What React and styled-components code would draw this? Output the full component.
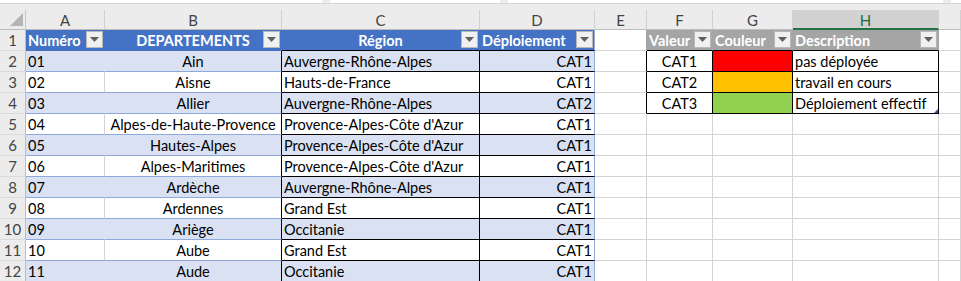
import * as React from 'react';
import styled, { createGlobalStyle } from 'styled-components';

const GlobalStyle = createGlobalStyle`
  html, body {
    margin: 0;
    padding: 0;
    background: #ffffff;
    overflow: hidden;
  }
  body {
    font-family: Lato, "Liberation Sans", sans-serif;
  }
`;

const GRID = '#d4d4d4';
const BLACK = '#000000';
const BAND = '#d9e1f2';
const BAND_LINE = '#8ea9db';
const BLUE = '#4472c4';
const GREY_HEAD = '#a5a5a5';
const HEAD_BG = '#ececec';

const Page = styled.div`
  width: 961px;
  height: 281px;
  overflow: hidden;
  background: ${HEAD_BG};
`;

const TopStrip = styled.div`
  display: flex;
  height: 3px;
  border-bottom: 1px solid #d6d6d6;
  gap: 8px;
`;

const StripPart = styled.div`
  background: #ffffff;
  width: ${props => props.w};
  flex: ${props => (props.w ? 'none' : '1')};
`;

const Spacer = styled.div`
  height: 6px;
`;

const Sheet = styled.div`
  display: grid;
  grid-template-columns: 26px 79px 177px 198px 115px 52px 66px 80px 146px 1fr;
  grid-auto-rows: 21px;
  grid-template-rows: 20px;
`;

const Corner = styled.div`
  background: ${HEAD_BG};
  border-right: 1px solid #c8c8c8;
  border-bottom: 1px solid #bdbdbd;
  box-sizing: border-box;
  display: flex;
  align-items: flex-end;
  justify-content: flex-end;
  padding: 0 2px 3px 0;
`;

const ColHead = styled.div`
  box-sizing: border-box;
  height: 20px;
  background: ${props => (props.$active ? '#d2d2d2' : HEAD_BG)};
  border-right: 1px solid #d0d0d0;
  border-bottom: ${props => (props.$active ? '2px solid #217346' : '1px solid #bdbdbd')};
  color: ${props => (props.$active ? '#1d6b3d' : '#444444')};
  font-size: 15px;
  display: flex;
  align-items: center;
  justify-content: center;
  padding-top: ${props => (props.$active ? '1px' : '0')};
`;

const RowHead = styled.div`
  box-sizing: border-box;
  background: ${HEAD_BG};
  border-right: 1px solid #bdbdbd;
  border-bottom: 1px solid #dadada;
  color: #444444;
  font-size: 15px;
  display: flex;
  align-items: center;
  justify-content: center;
`;

const Cell = styled.div`
  position: relative;
  box-sizing: border-box;
  height: 21px;
  background: ${props => props.$bg || '#ffffff'};
  border-right: 1px solid ${props => props.$r || GRID};
  border-bottom: 1px solid ${props => props.$b || GRID};
  color: ${props => props.$color || '#000000'};
  font-weight: ${props => (props.$bold ? 700 : 400)};
  font-size: 14.5px;
  display: flex;
  align-items: center;
  justify-content: ${props => props.$align || 'flex-start'};
  padding: 0 ${props => (props.$pr || '2px')} 0 2px;
  white-space: nowrap;
  overflow: hidden;
`;

const FilterBtn = styled.span`
  position: absolute;
  right: 1px;
  top: 1px;
  width: 17px;
  height: 17px;
  box-sizing: border-box;
  background: #f0f0f0;
  border: 1px solid #b8b8b8;
  display: flex;
  align-items: center;
  justify-content: center;
`;

const Handle = styled.span`
  position: absolute;
  right: 0;
  bottom: 0;
  width: 0;
  height: 0;
  border-left: 4px solid transparent;
  border-bottom: 4px solid #2f5597;
`;

function Filter() {
  return (
    <FilterBtn>
      <svg width="9" height="5" viewBox="0 0 9 5">
        <path d="M0 0 L9 0 L4.5 5 Z" fill="#5f5f5f" />
      </svg>
    </FilterBtn>
  );
}

const rows = [
  ['01', 'Ain', 'Auvergne-Rhône-Alpes', 'CAT1'],
  ['02', 'Aisne', 'Hauts-de-France', 'CAT1'],
  ['03', 'Allier', 'Auvergne-Rhône-Alpes', 'CAT2'],
  ['04', 'Alpes-de-Haute-Provence', "Provence-Alpes-Côte d'Azur", 'CAT1'],
  ['05', 'Hautes-Alpes', "Provence-Alpes-Côte d'Azur", 'CAT1'],
  ['06', 'Alpes-Maritimes', "Provence-Alpes-Côte d'Azur", 'CAT1'],
  ['07', 'Ardèche', 'Auvergne-Rhône-Alpes', 'CAT1'],
  ['08', 'Ardennes', 'Grand Est', 'CAT1'],
  ['09', 'Ariège', 'Occitanie', 'CAT1'],
  ['10', 'Aube', 'Grand Est', 'CAT1'],
  ['11', 'Aude', 'Occitanie', 'CAT1'],
];

const legend = [
  ['CAT1', '#ff0000', 'pas déployée'],
  ['CAT2', '#ffc000', 'travail en cours'],
  ['CAT3', '#92d050', 'Déploiement effectif'],
];

const letters = ['A', 'B', 'C', 'D', 'E', 'F', 'G', 'H', ''];

export default function App() {
  return (
    <>
      <GlobalStyle />
      <Page>
        <TopStrip>
          <StripPart w="322px" />
          <StripPart w="170px" />
          <StripPart w="435px" />
          <StripPart />
        </TopStrip>
        <Spacer />
        <Sheet>
          <Corner>
            <svg width="13" height="13" viewBox="0 0 13 13">
              <path d="M13 0 L13 13 L0 13 Z" fill="#b4b4b4" />
            </svg>
          </Corner>
          {letters.map((l, i) => (
            <ColHead key={i} $active={l === 'H'}>{l}</ColHead>
          ))}

          {/* row 1 : table headers */}
          <RowHead>1</RowHead>
          <Cell $bg={BLUE} $r={BLUE} $b={BLUE} $bold $color="#fff" $pr="20px">
            Numéro<Filter />
          </Cell>
          <Cell $bg={BLUE} $r={BLUE} $b={BLUE} $bold $color="#fff" $align="center">
            DEPARTEMENTS<Filter />
          </Cell>
          <Cell $bg={BLUE} $r={BLUE} $b={BLACK} $bold $color="#fff" $align="center">
            Région<Filter />
          </Cell>
          <Cell $bg={BLUE} $r={BAND_LINE} $b={BLACK} $bold $color="#fff">
            Déploiement<Filter />
          </Cell>
          <Cell $b={GRID} $r={GREY_HEAD} />
          <Cell $bg={GREY_HEAD} $r={GREY_HEAD} $b={BLACK} $bold $color="#fff">
            Valeur<Filter />
          </Cell>
          <Cell $bg={GREY_HEAD} $r={GREY_HEAD} $b={BLACK} $bold $color="#fff">
            Couleur<Filter />
          </Cell>
          <Cell $bg={GREY_HEAD} $r={GREY_HEAD} $b={BLACK} $bold $color="#fff">
            Description<Filter />
          </Cell>
          <Cell />

          {rows.map((r, i) => {
            const band = i % 2 === 0;
            const bg = band ? BAND : '#ffffff';
            const lg = legend[i];
            return (
              <React.Fragment key={r[0]}>
                <RowHead>{i + 2}</RowHead>
                <Cell $bg={bg} $r={band ? BAND : GRID} $b={BAND_LINE}>{r[0]}</Cell>
                <Cell $bg={bg} $r={BLACK} $b={BAND_LINE} $align="center">{r[1]}</Cell>
                <Cell $bg={bg} $r={BLACK} $b={BLACK}>{r[2]}</Cell>
                <Cell $bg={bg} $r={BAND_LINE} $b={BLACK} $align="flex-end">{r[3]}</Cell>
                <Cell $r={lg ? BLACK : GRID} />
                {lg ? (
                  <>
                    <Cell $r={BLACK} $b={BLACK} $align="center">{lg[0]}</Cell>
                    <Cell $bg={lg[1]} $r={BLACK} $b={BLACK} />
                    <Cell $r={BLACK} $b={BLACK}>
                      {lg[2]}
                      {i === 2 && <Handle />}
                    </Cell>
                  </>
                ) : (
                  <>
                    <Cell />
                    <Cell />
                    <Cell />
                  </>
                )}
                <Cell />
              </React.Fragment>
            );
          })}
        </Sheet>
      </Page>
    </>
  );
}
